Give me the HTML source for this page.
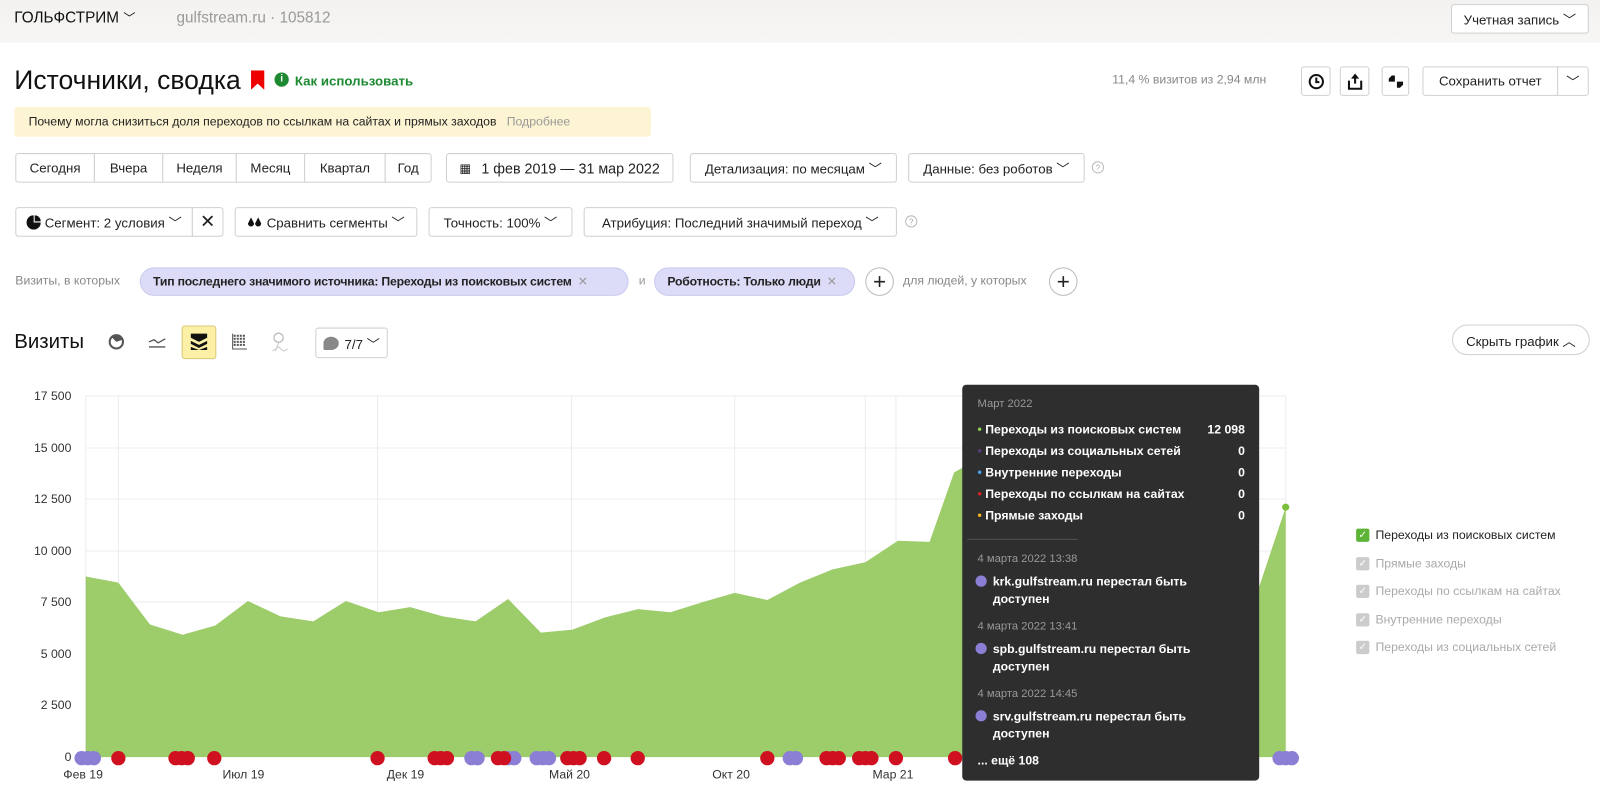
<!DOCTYPE html>
<html><head><meta charset="utf-8">
<style>
*{box-sizing:border-box;margin:0;padding:0}
body{width:1600px;height:785px;overflow:hidden;background:#fff;font-family:"Liberation Sans","DejaVu Sans",sans-serif;color:#222;position:relative}
#w{position:absolute;left:0;top:0;width:1568px;height:770px;transform:scale(1.0204);transform-origin:0 0}
.a{position:absolute}
.btn{position:absolute;border:1px solid #d0d0d0;border-radius:3px;background:#fff;font-size:13px;display:flex;align-items:center;justify-content:center;color:#222;white-space:nowrap}
.seg{position:absolute;top:150px;height:29px;border:1px solid #d0d0d0;font-size:13px;display:flex;align-items:center;justify-content:center;background:#fff}
.chip{position:absolute;top:262px;height:28px;border-radius:14px;background:#dcdcf8;border:1px solid #c9c9ee;font-size:12px;letter-spacing:-0.2px;white-space:nowrap;display:flex;align-items:center;padding-left:12px;font-weight:bold;color:#222}
.plus{position:absolute;width:28px;height:28px;border:1px solid #bbb;border-radius:50%;font-size:22px;display:flex;align-items:center;justify-content:center;line-height:1}
.q{position:absolute;width:12px;height:12px;border:1px solid #bbb;border-radius:50%;font-size:8px;color:#aaa;display:flex;align-items:center;justify-content:center}
.yl{position:absolute;right:1498px;font-size:12px;color:#333;text-align:right}
.xl{position:absolute;top:752px;font-size:12px;color:#333}
.tt{color:#fff;font-size:12px;font-weight:bold;white-space:nowrap}
.lg{position:absolute;left:1329px;font-size:12px;color:#aaa;display:flex;align-items:center;white-space:nowrap}
.cb{width:13px;height:13px;background:#ccc;border-radius:2px;margin-right:6px;color:#fff;font-size:10px;display:flex;align-items:center;justify-content:center}
</style></head><body><div id="w">
<div class="a" style="left:0;top:0;width:1600px;height:42px;background:linear-gradient(#f3f2f0,#f7f6f4)"></div>
<div class="a" style="left:14px;top:9px;font-size:15px;color:#111">ГОЛЬФСТРИМ <span style="font-size:12px">﹀</span></div>
<div class="a" style="left:173px;top:9px;font-size:15px;color:#999">gulfstream.ru · 105812</div>
<div class="btn" style="left:1422px;top:4px;width:135px;height:29px;font-size:13px">Учетная запись ﹀</div>

<div class="a" style="left:14px;top:63px;font-size:26px;color:#111">Источники, сводка</div>
<svg class="a" style="left:246px;top:69px" width="14" height="20"><path d="M0 0H13V19L6.5 13L0 19Z" fill="#e00"/></svg>
<div class="a" style="left:269px;top:71px;width:14px;height:14px;border-radius:50%;background:#1d8a32;color:#fff;font-size:10px;font-weight:bold;text-align:center;line-height:14px">i</div>
<div class="a" style="left:289px;top:72px;font-size:13px;color:#1d8a32;font-weight:bold">Как использовать</div>

<div class="a" style="left:1090px;top:71px;font-size:12px;color:#888">11,4 % визитов из 2,94 млн</div>
<div class="btn" style="left:1275px;top:65px;width:29px;height:29px"><svg width="16" height="16"><circle cx="8" cy="8" r="6.5" fill="none" stroke="#111" stroke-width="2"/><path d="M8 4V8.5H11" fill="none" stroke="#111" stroke-width="2"/></svg></div>
<div class="btn" style="left:1313px;top:65px;width:29px;height:29px"><svg width="16" height="18"><path d="M8 1L4 6H7V11H9V6H12Z" fill="#111"/><path d="M2 8V16H14V8" fill="none" stroke="#111" stroke-width="2"/></svg></div>
<div class="btn" style="left:1354px;top:65px;width:27px;height:29px"><svg width="16" height="14"><path d="M1 4L4 1H7V7H1Z M9 7H15V10L12 13H9Z" fill="#111"/></svg></div>
<div class="btn" style="left:1394px;top:65px;width:133px;height:29px;border-radius:3px 0 0 3px">Сохранить отчет</div>
<div class="btn" style="left:1526px;top:65px;width:31px;height:29px;border-radius:0 3px 3px 0">﹀</div>

<div class="a" style="left:14px;top:105px;width:624px;height:29px;background:#fdf4d3;border-radius:3px;font-size:12px;padding:7px 14px;color:#222;white-space:nowrap">Почему могла снизиться доля переходов по ссылкам на сайтах и прямых заходов &nbsp;&nbsp;<span style="color:#999">Подробнее</span></div>

<div class="seg" style="left:15px;width:78px;border-radius:3px 0 0 3px">Сегодня</div>
<div class="seg" style="left:92px;width:68px">Вчера</div>
<div class="seg" style="left:159px;width:73px">Неделя</div>
<div class="seg" style="left:231px;width:68px">Месяц</div>
<div class="seg" style="left:298px;width:80px">Квартал</div>
<div class="seg" style="left:377px;width:46px;border-radius:0 3px 3px 0">Год</div>
<div class="btn" style="left:437px;top:150px;width:223px;height:29px;font-size:14px"><b style="font-size:12px;margin-right:10px">▦</b>1 фев 2019 — 31 мар 2022</div>
<div class="btn" style="left:676px;top:150px;width:203px;height:29px">Детализация: по месяцам ﹀</div>
<div class="btn" style="left:890px;top:150px;width:173px;height:29px">Данные: без роботов ﹀</div>
<div class="q" style="left:1070px;top:158px">?</div>

<div class="btn" style="left:15px;top:203px;width:174px;height:29px;border-radius:3px 0 0 3px"><svg width="14" height="14" style="margin-right:4px"><path d="M7 7V0A7 7 0 1 0 14 7Z" fill="#111"/><path d="M8 6V0A6 6 0 0 1 14 6Z" fill="#111"/></svg>Сегмент: 2 условия ﹀</div>
<div class="btn" style="left:188px;top:203px;width:31px;height:29px;border-radius:0 3px 3px 0;font-size:18px">✕</div>
<div class="btn" style="left:230px;top:203px;width:179px;height:29px"><svg width="16" height="14" style="margin-right:3px"><path d="M4 2L1 8A3 3 0 0 0 7 8Z M11 2L8 8A3 3 0 0 0 14 8Z" fill="#111"/></svg>Сравнить сегменты ﹀</div>
<div class="btn" style="left:420px;top:203px;width:141px;height:29px">Точность: 100% ﹀</div>
<div class="btn" style="left:572px;top:203px;width:307px;height:29px">Атрибуция: Последний значимый переход ﹀</div>
<div class="q" style="left:887px;top:211px">?</div>

<div class="a" style="left:15px;top:268px;font-size:12px;color:#888">Визиты, в которых</div>
<div class="chip" style="left:137px;width:479px">Тип последнего значимого источника: Переходы из поисковых систем <span style="color:#999;font-weight:normal;margin-left:6px">✕</span></div>
<div class="a" style="left:626px;top:268px;font-size:12px;color:#999">и</div>
<div class="chip" style="left:641px;width:197px">Роботность: Только люди <span style="color:#999;font-weight:normal;margin-left:6px">✕</span></div>
<div class="plus" style="left:848px;top:262px">+</div>
<div class="a" style="left:885px;top:268px;font-size:12px;color:#888">для людей, у которых</div>
<div class="plus" style="left:1028px;top:262px">+</div>

<div class="a" style="left:14px;top:324px;font-size:20px;color:#111">Визиты</div>
<svg class="a" style="left:106px;top:327px" width="16" height="16"><circle cx="8" cy="8" r="6.5" fill="none" stroke="#555" stroke-width="2"/><path d="M8 8L3 3A7 7 0 0 1 14 6Z" fill="#555"/></svg>
<svg class="a" style="left:145px;top:328px" width="18" height="14"><path d="M1 7L6 5L10 8L17 4M1 12H17" fill="none" stroke="#555" stroke-width="1.3"/></svg>
<div class="a" style="left:178px;top:319px;width:34px;height:33px;background:#fcefa6;border:1px solid #d8c878;border-radius:3px"></div>
<svg class="a" style="left:186px;top:326px" width="18" height="18"><path d="M1 1H17V5L9 9L1 5Z M1 8L9 12L17 8V11L9 15L1 11Z M1 14L9 17L17 14V17H1Z" fill="#111"/></svg>
<svg class="a" style="left:227px;top:326px" width="16" height="18"><path d="M1 1V16H15" fill="none" stroke="#555"/><path d="M3 2V14M6 2V14M9 2V14M12 2V14" stroke="#555" stroke-width="2" stroke-dasharray="2 1"/></svg>
<svg class="a" style="left:265px;top:325px" width="18" height="22"><circle cx="8" cy="6" r="4.5" fill="none" stroke="#bbb" stroke-width="1.3"/><path d="M8 11L5 19M2 19L8 15L13 19L17 17" fill="none" stroke="#ccc"/></svg>
<div class="btn" style="left:309px;top:321px;width:71px;height:30px;font-size:13px"><span style="display:inline-block;width:15px;height:13px;background:#888;border-radius:50% 50% 50% 10%;margin-right:6px"></span>7/7 ﹀</div>
<div class="btn" style="left:1423px;top:318px;width:135px;height:30px;border-radius:15px">Скрыть график ︿</div>

<svg class="a" style="left:0;top:380px" width="1600" height="380">
<g stroke="#ececec" stroke-width="1">
<line x1="84" y1="8" x2="1260" y2="8"/><line x1="84" y1="59" x2="1260" y2="59"/><line x1="84" y1="109" x2="1260" y2="109"/><line x1="84" y1="160" x2="1260" y2="160"/><line x1="84" y1="210" x2="1260" y2="210"/><line x1="84" y1="261" x2="1260" y2="261"/><line x1="84" y1="311" x2="1260" y2="311"/>
<line x1="84" y1="8" x2="84" y2="362"/><line x1="116" y1="8" x2="116" y2="362"/><line x1="370" y1="8" x2="370" y2="362"/><line x1="560" y1="8" x2="560" y2="362"/><line x1="720" y1="8" x2="720" y2="362"/><line x1="848" y1="8" x2="848" y2="362"/><line x1="878" y1="8" x2="878" y2="362"/><line x1="1260" y1="8" x2="1260" y2="362"/>
</g>
<path fill="#9dcc6b" d="M84 185L116 191L147 232L179 242L211 233L243 209L275 224L307 229L339 209L371 220L402 215L434 224L466 229L498 207L530 240L561 237L593 225L625 217L657 220L689 210L720 201L752 208L784 191L816 178L848 171L880 150L911 151L935 83L975 60L1007 90L1039 75L1071 100L1102 120L1134 140L1166 130L1198 160L1234 195L1260 117L1260 362L84 362Z"/>
<circle cx="1260" cy="117" r="3.5" fill="#7cbf3c"/>
<g fill="#8a7fd4"><circle cx="80" cy="363" r="7"/><circle cx="86" cy="363" r="7"/><circle cx="92" cy="363" r="7"/><circle cx="462" cy="363" r="7"/><circle cx="468" cy="363" r="7"/><circle cx="498" cy="363" r="7"/><circle cx="504" cy="363" r="7"/><circle cx="526" cy="363" r="7"/><circle cx="532" cy="363" r="7"/><circle cx="538" cy="363" r="7"/><circle cx="774" cy="363" r="7"/><circle cx="780" cy="363" r="7"/><circle cx="1254" cy="363" r="7"/><circle cx="1260" cy="363" r="7"/><circle cx="1266" cy="363" r="7"/></g>
<g fill="#cf1020"><circle cx="116" cy="363" r="7"/><circle cx="172" cy="363" r="7"/><circle cx="178" cy="363" r="7"/><circle cx="184" cy="363" r="7"/><circle cx="210" cy="363" r="7"/><circle cx="370" cy="363" r="7"/><circle cx="426" cy="363" r="7"/><circle cx="432" cy="363" r="7"/><circle cx="438" cy="363" r="7"/><circle cx="488" cy="363" r="7"/><circle cx="494" cy="363" r="7"/><circle cx="556" cy="363" r="7"/><circle cx="562" cy="363" r="7"/><circle cx="568" cy="363" r="7"/><circle cx="592" cy="363" r="7"/><circle cx="625" cy="363" r="7"/><circle cx="752" cy="363" r="7"/><circle cx="810" cy="363" r="7"/><circle cx="816" cy="363" r="7"/><circle cx="822" cy="363" r="7"/><circle cx="842" cy="363" r="7"/><circle cx="848" cy="363" r="7"/><circle cx="854" cy="363" r="7"/><circle cx="878" cy="363" r="7"/><circle cx="936" cy="363" r="7"/></g>
</svg>
<div class="yl" style="top:381px">17 500</div>
<div class="yl" style="top:432px">15 000</div>
<div class="yl" style="top:482px">12 500</div>
<div class="yl" style="top:533px">10 000</div>
<div class="yl" style="top:583px">7 500</div>
<div class="yl" style="top:634px">5 000</div>
<div class="yl" style="top:684px">2 500</div>
<div class="yl" style="top:735px">0</div>
<div class="xl" style="left:62px">Фев 19</div>
<div class="xl" style="left:218px">Июл 19</div>
<div class="xl" style="left:379px">Дек 19</div>
<div class="xl" style="left:538px">Май 20</div>
<div class="xl" style="left:698px">Окт 20</div>
<div class="xl" style="left:855px">Мар 21</div>

<div class="a" style="left:943px;top:377px;width:291px;height:388px;background:#2e2e2e;border-radius:4px"></div>
<div class="a" style="left:958px;top:390px;font-size:11px;color:#999">Март 2022</div>
<div class="a tt" style="left:958px;top:414px;width:262px"><span style="color:#8fd14f">•</span> Переходы из поисковых систем<span style="float:right">12 098</span></div>
<div class="a tt" style="left:958px;top:435px;width:262px"><span style="color:#5a3d80">•</span> Переходы из социальных сетей<span style="float:right">0</span></div>
<div class="a tt" style="left:958px;top:456px;width:262px"><span style="color:#4aa3ee">•</span> Внутренние переходы<span style="float:right">0</span></div>
<div class="a tt" style="left:958px;top:477px;width:262px"><span style="color:#e02020">•</span> Переходы по ссылкам на сайтах<span style="float:right">0</span></div>
<div class="a tt" style="left:958px;top:498px;width:262px"><span style="color:#f5b520">•</span> Прямые заходы<span style="float:right">0</span></div>
<div class="a" style="left:948px;top:528px;width:108px;height:1px;background:#555"></div>
<div class="a" style="left:958px;top:542px;font-size:11px;color:#999">4 марта 2022 13:38</div>
<div class="a tt" style="left:973px;top:562px;line-height:17px">krk.gulfstream.ru перестал быть<br>доступен</div>
<div class="a" style="left:958px;top:608px;font-size:11px;color:#999">4 марта 2022 13:41</div>
<div class="a tt" style="left:973px;top:628px;line-height:17px">spb.gulfstream.ru перестал быть<br>доступен</div>
<div class="a" style="left:958px;top:674px;font-size:11px;color:#999">4 марта 2022 14:45</div>
<div class="a tt" style="left:973px;top:694px;line-height:17px">srv.gulfstream.ru перестал быть<br>доступен</div>
<div class="a" style="left:956px;top:564px;width:11px;height:11px;border-radius:50%;background:#8a7fd4"></div>
<div class="a" style="left:956px;top:630px;width:11px;height:11px;border-radius:50%;background:#8a7fd4"></div>
<div class="a" style="left:956px;top:696px;width:11px;height:11px;border-radius:50%;background:#8a7fd4"></div>
<div class="a tt" style="left:958px;top:738px">... ещё 108</div>

<div class="lg" style="top:517px;color:#222"><span class="cb" style="background:#5cb335">✓</span>Переходы из поисковых систем</div>
<div class="lg" style="top:545px"><span class="cb">✓</span>Прямые заходы</div>
<div class="lg" style="top:572px"><span class="cb">✓</span>Переходы по ссылкам на сайтах</div>
<div class="lg" style="top:600px"><span class="cb">✓</span>Внутренние переходы</div>
<div class="lg" style="top:627px"><span class="cb">✓</span>Переходы из социальных сетей</div>
</div></body></html>
